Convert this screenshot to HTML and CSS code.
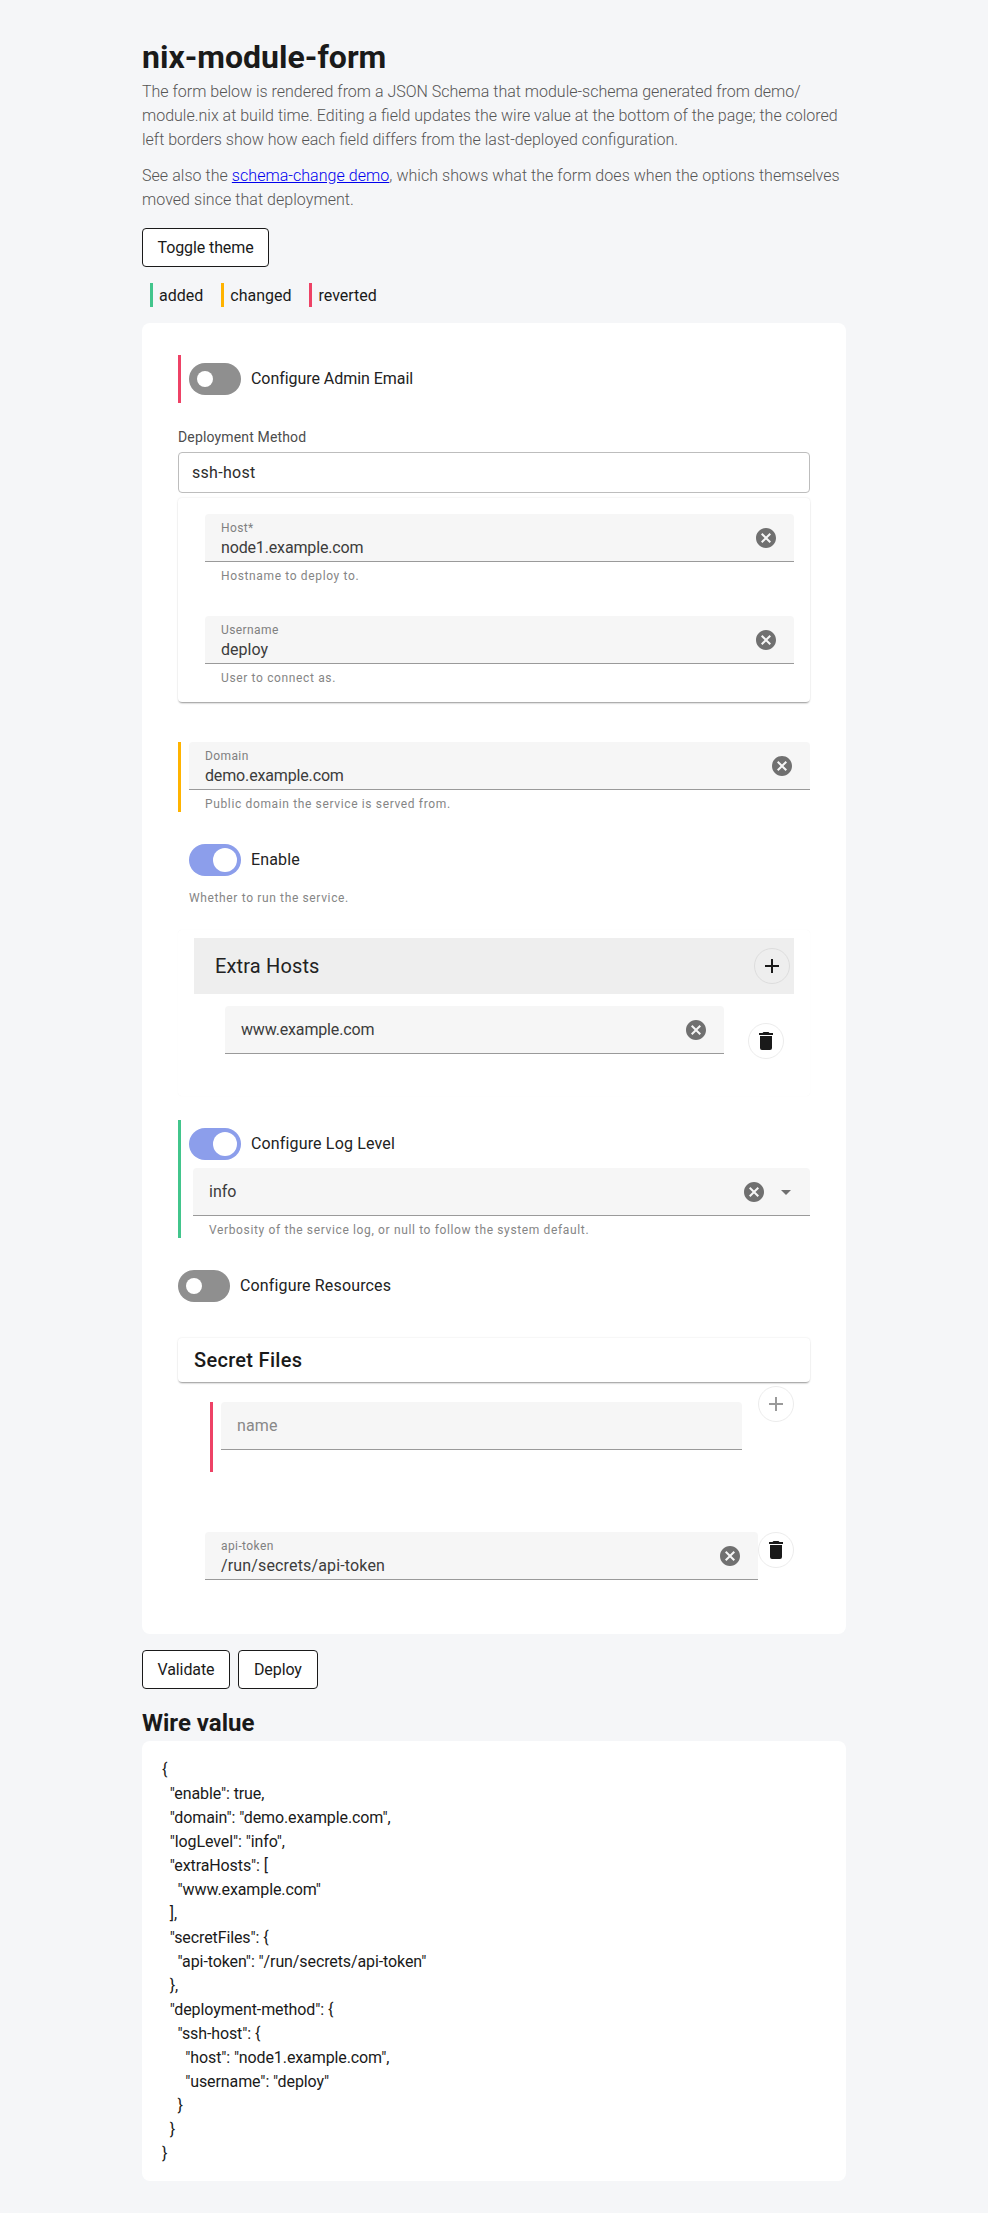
FILE: index.html
```html
<!DOCTYPE html>
<html lang="en">
<head>
<meta charset="utf-8">
<title>nix-module-form</title>
<link rel="stylesheet" href="styles.css">
</head>
<body>
<main class="page">
  <h1 class="title">nix-module-form</h1>
  <p class="intro">The form below is rendered from a JSON Schema that module-schema generated from demo/ module.nix at build time. Editing a field updates the wire value at the bottom of the page; the colored left borders show how each field differs from the last-deployed configuration.</p>
  <p class="intro second">See also the <a href="#">schema-change demo</a>, which shows what the form does when the options themselves moved since that deployment.</p>
  <button class="btn theme-btn" type="button">Toggle theme</button>
  <div class="legend">
    <span class="legend-item mark-added">added</span>
    <span class="legend-item mark-changed">changed</span>
    <span class="legend-item mark-reverted">reverted</span>
  </div>

  <section class="panel">
    <div class="switch-row mark-reverted row-admin">
      <span class="switch"><span class="thumb"></span></span>
      <span class="switch-label tight">Configure Admin Email</span>
    </div>

    <label class="select-label">Deployment Method</label>
    <div class="select-box">ssh-host</div>
    <div class="method-card">
      <div class="field">
        <div class="field-text"><span class="field-label">Host*</span><span class="field-value tight">node1.example.com</span></div>
        <svg class="clear" viewBox="0 0 24 24"><path d="M12,2C17.53,2 22,6.47 22,12C22,17.53 17.53,22 12,22C6.47,22 2,17.53 2,12C2,6.47 6.47,2 12,2M15.59,7L12,10.59L8.41,7L7,8.41L10.59,12L7,15.59L8.41,17L12,13.41L15.59,17L17,15.59L13.41,12L17,8.41L15.59,7Z"/></svg>
      </div>
      <div class="helper">Hostname to deploy to.</div>
      <div class="field field-next">
        <div class="field-text"><span class="field-label">Username</span><span class="field-value">deploy</span></div>
        <svg class="clear" viewBox="0 0 24 24"><path d="M12,2C17.53,2 22,6.47 22,12C22,17.53 17.53,22 12,22C6.47,22 2,17.53 2,12C2,6.47 6.47,2 12,2M15.59,7L12,10.59L8.41,7L7,8.41L10.59,12L7,15.59L8.41,17L12,13.41L15.59,17L17,15.59L13.41,12L17,8.41L15.59,7Z"/></svg>
      </div>
      <div class="helper">User to connect as.</div>
    </div>

    <div class="domain-row mark-changed">
      <div class="field">
        <div class="field-text"><span class="field-label">Domain</span><span class="field-value tight">demo.example.com</span></div>
        <svg class="clear" viewBox="0 0 24 24"><path d="M12,2C17.53,2 22,6.47 22,12C22,17.53 17.53,22 12,22C6.47,22 2,17.53 2,12C2,6.47 6.47,2 12,2M15.59,7L12,10.59L8.41,7L7,8.41L10.59,12L7,15.59L8.41,17L12,13.41L15.59,17L17,15.59L13.41,12L17,8.41L15.59,7Z"/></svg>
      </div>
      <div class="helper">Public domain the service is served from.</div>
    </div>

    <div class="switch-row row-enable">
      <span class="switch on"><span class="thumb"></span></span>
      <span class="switch-label">Enable</span>
    </div>
    <div class="helper enable-help">Whether to run the service.</div>

    <div class="hosts-card">
      <div class="hosts-head">
        <span class="hosts-title">Extra Hosts</span>
        <span class="round-btn ghost"><svg viewBox="0 0 24 24"><path d="M19,13H13V19H11V13H5V11H11V5H13V11H19V13Z"/></svg></span>
      </div>
      <div class="hosts-row">
        <div class="field field-grow field-plain">
          <div class="field-text"><span class="field-value tight">www.example.com</span></div>
          <svg class="clear" viewBox="0 0 24 24"><path d="M12,2C17.53,2 22,6.47 22,12C22,17.53 17.53,22 12,22C6.47,22 2,17.53 2,12C2,6.47 6.47,2 12,2M15.59,7L12,10.59L8.41,7L7,8.41L10.59,12L7,15.59L8.41,17L12,13.41L15.59,17L17,15.59L13.41,12L17,8.41L15.59,7Z"/></svg>
        </div>
        <span class="round-btn trash-offset"><svg viewBox="0 0 24 24"><path d="M19,4H15.5L14.5,3H9.5L8.5,4H5V6H19M6,19A2,2 0 0,0 8,21H16A2,2 0 0,0 18,19V7H6V19Z"/></svg></span>
      </div>
    </div>

    <div class="log-row mark-added">
      <div class="switch-row">
        <span class="switch on"><span class="thumb"></span></span>
        <span class="switch-label">Configure Log Level</span>
      </div>
      <div class="field field-plain log-field">
        <div class="field-text"><span class="field-value">info</span></div>
        <svg class="clear" viewBox="0 0 24 24"><path d="M12,2C17.53,2 22,6.47 22,12C22,17.53 17.53,22 12,22C6.47,22 2,17.53 2,12C2,6.47 6.47,2 12,2M15.59,7L12,10.59L8.41,7L7,8.41L10.59,12L7,15.59L8.41,17L12,13.41L15.59,17L17,15.59L13.41,12L17,8.41L15.59,7Z"/></svg>
        <svg class="caret" viewBox="0 0 24 24"><path d="M7,10L12,15L17,10H7Z"/></svg>
      </div>
      <div class="helper log-help">Verbosity of the service log, or null to follow the system default.</div>
    </div>

    <div class="switch-row row-resources">
      <span class="switch"><span class="thumb"></span></span>
      <span class="switch-label">Configure Resources</span>
    </div>

    <div class="secret-card">Secret Files</div>
    <div class="secret-add">
      <div class="pending mark-reverted">
        <div class="field field-plain">
          <div class="field-text"><span class="field-placeholder">name</span></div>
        </div>
      </div>
      <span class="round-btn disabled"><svg viewBox="0 0 24 24"><path d="M19,13H13V19H11V13H5V11H11V5H13V11H19V13Z"/></svg></span>
    </div>
    <div class="secret-item">
      <div class="field field-grow">
        <div class="field-text"><span class="field-label">api-token</span><span class="field-value wide">/run/secrets/api-token</span></div>
        <svg class="clear" viewBox="0 0 24 24"><path d="M12,2C17.53,2 22,6.47 22,12C22,17.53 17.53,22 12,22C6.47,22 2,17.53 2,12C2,6.47 6.47,2 12,2M15.59,7L12,10.59L8.41,7L7,8.41L10.59,12L7,15.59L8.41,17L12,13.41L15.59,17L17,15.59L13.41,12L17,8.41L15.59,7Z"/></svg>
      </div>
      <span class="round-btn"><svg viewBox="0 0 24 24"><path d="M19,4H15.5L14.5,3H9.5L8.5,4H5V6H19M6,19A2,2 0 0,0 8,21H16A2,2 0 0,0 18,19V7H6V19Z"/></svg></span>
    </div>
  </section>

  <div class="actions">
    <button class="btn" type="button">Validate</button>
    <button class="btn btn-deploy" type="button">Deploy</button>
  </div>
  <h2 class="wire-title">Wire value</h2>
  <pre class="wire">{
  "enable": true,
  "domain": "demo.example.com",
  "logLevel": "info",
  "extraHosts": [
    "www.example.com"
  ],
  "secretFiles": {
    "api-token": "/run/secrets/api-token"
  },
  "deployment-method": {
    "ssh-host": {
      "host": "node1.example.com",
      "username": "deploy"
    }
  }
}</pre>
</main>
</body>
</html>
```
FILE: styles.css
```css
* { box-sizing: border-box; }
html, body { margin: 0; padding: 0; }
body {
  background: #f5f6f8;
  color: #1a1a1a;
  font-family: Roboto, "Noto Sans", sans-serif;
  font-size: 16px;
  line-height: 24px;
}
.page { width: 704px; margin: 0 auto; padding: 38px 0 32px; }
.title { margin: 0 0 4px; font-size: 32px; line-height: 38px; font-weight: 700; }
.intro { margin: 0 0 12px; color: #555; font-weight: 300; }
.intro.second { margin-bottom: 16px; letter-spacing: 0.05px; }
.intro a { color: #0000ee; }
.btn {
  display: inline-block;
  height: 39px;
  padding: 0 14.5px;
  background: #fff;
  border: 1px solid #1a1a1a;
  border-radius: 4px;
  color: #1a1a1a;
  font: 400 16px/24px Roboto, sans-serif;
  letter-spacing: -0.1px;
}
.btn-deploy { padding: 0 15px; }
.theme-btn { display: block; }
.legend { display: flex; gap: 18px; margin: 16px 0; padding-left: 8px; height: 24px; line-height: 25px; }
.legend-item { border-left: 3px solid transparent; padding-left: 6px; }
.mark-added { border-left: 3px solid #42c58c; }
.mark-changed { border-left: 3px solid #ffb300; }
.mark-reverted { border-left: 3px solid #ee4266; }
.panel { background: #fff; border-radius: 8px; padding: 32px 36px 54px; }
.switch-row { display: flex; align-items: center; height: 32px; }
.switch-label { margin-left: 10px; letter-spacing: 0.15px; color: #222; }
.switch-label.tight { letter-spacing: -0.05px; }
.switch { position: relative; display: block; width: 52px; height: 32px; border-radius: 16px; background: #8f8f8f; flex: none; }
.thumb { position: absolute; left: 8px; top: 8px; width: 16px; height: 16px; border-radius: 50%; background: #fff; }
.switch.on { background: #8c9eeb; }
.switch.on .thumb { left: 24px; top: 4px; width: 24px; height: 24px; }
.row-admin { height: 48px; padding-left: 8px; }
.select-label { display: block; margin-top: 24px; font-size: 14px; line-height: 20px; letter-spacing: 0.15px; color: #4c4c4c; }
.select-box {
  margin-top: 5px;
  height: 41px;
  padding: 0 13px;
  border: 1px solid #bdbdbd;
  border-radius: 4px;
  line-height: 39px;
  letter-spacing: 0.3px;
  color: #2c2c2c;
}
.method-card {
  margin-top: 5px;
  padding: 16px 16px 16px 27px;
  background: #fff;
  border-radius: 4px;
  box-shadow: 0 2px 2px -1px rgba(0,0,0,.4), 0 0 2px rgba(0,0,0,.12);
}
.field {
  position: relative;
  display: flex;
  align-items: center;
  height: 48px;
  padding: 0 16px;
  background: #f6f6f6;
  border-bottom: 1px solid #9a9a9a;
  border-radius: 4px 4px 0 0;
}
.field-next { margin-top: 32px; }
.field-text { display: flex; flex-direction: column; flex: 1; min-width: 0; padding-top: 2px; }
.field-label { font-size: 12px; line-height: 16px; letter-spacing: 0.4px; color: #808080; margin-top: 3px; }
.field-value { line-height: 24px; color: #3c3c3c; }
.field-plain .field-text { padding-top: 1px; }
.field-value.tight { letter-spacing: -0.15px; }
.field-value.wide { letter-spacing: 0.15px; }
.field-placeholder { line-height: 24px; letter-spacing: 0.15px; color: #888; }
.clear { width: 24px; height: 24px; fill: #707070; flex: none; }
.caret { width: 24px; height: 24px; fill: #707070; flex: none; margin: 0 -4px 0 8px; }
.helper { margin-top: 6px; padding-left: 16px; font-size: 12px; line-height: 16px; letter-spacing: 0.64px; color: #858585; }
.domain-row { margin-top: 40px; padding-left: 8px; }
.row-enable { margin-top: 32px; padding-left: 11px; }
.enable-help { margin-top: 14px; padding-left: 11px; }
.hosts-card { margin-top: 24px; padding: 8px 16px 37px; border-radius: 4px; box-shadow: 0 0 1px rgba(0,0,0,.06); }
.hosts-head { display: flex; align-items: center; justify-content: space-between; height: 56px; padding: 0 4px 0 21px; background: #eee; }
.hosts-title { font-size: 20px; line-height: 28px; letter-spacing: 0.15px; color: #222; }
.round-btn {
  display: flex;
  align-items: center;
  justify-content: center;
  width: 36px;
  height: 36px;
  flex: none;
  background: #fff;
  border: 1px solid #ececec;
  border-radius: 50%;
}
.round-btn.ghost { background: transparent; border-color: #ddd; }
.round-btn svg { width: 24px; height: 24px; fill: #1a1a1a; flex: none; }
.round-btn.disabled svg { fill: #9a9a9a; }
.hosts-row { display: flex; align-items: flex-start; margin-top: 12px; padding-left: 31px; }
.field-grow { flex: 1; min-width: 0; }
.trash-offset { margin: 17px 10px 0 24px; }
.log-row { margin-top: 24px; padding: 8px 0 0 8px; height: 118px; }
.log-field { margin: 8px 0 0 4px; }
.log-help { padding-left: 20px; }
.row-resources { margin-top: 32px; }
.secret-card {
  display: flex;
  align-items: center;
  margin-top: 36px;
  height: 44px;
  padding: 0 16px;
  background: #fff;
  border-radius: 4px;
  box-shadow: 0 2px 2px -1px rgba(0,0,0,.4), 0 0 2px rgba(0,0,0,.12);
  font-size: 20px;
  font-weight: 500;
  letter-spacing: 0.3px;
}
.secret-add { display: flex; align-items: flex-start; margin: 4px 16px 0 32px; }
.pending { flex: 1; height: 70px; margin-top: 16px; padding: 0 16px 0 8px; }
.secret-item { display: flex; align-items: flex-start; margin: 60px 16px 0 27px; }
.actions { display: flex; gap: 8px; margin-top: 16px; }
.wire-title { margin: 20px 0 4px; font-size: 24px; line-height: 28px; font-weight: 700; }
.wire {
  margin: 0;
  height: 440px;
  padding: 17px 20px;
  background: #fff;
  border-radius: 8px;
  font: 400 16px/24px Roboto, sans-serif;
  letter-spacing: -0.1px;
  color: #1a1a1a;
}
```
